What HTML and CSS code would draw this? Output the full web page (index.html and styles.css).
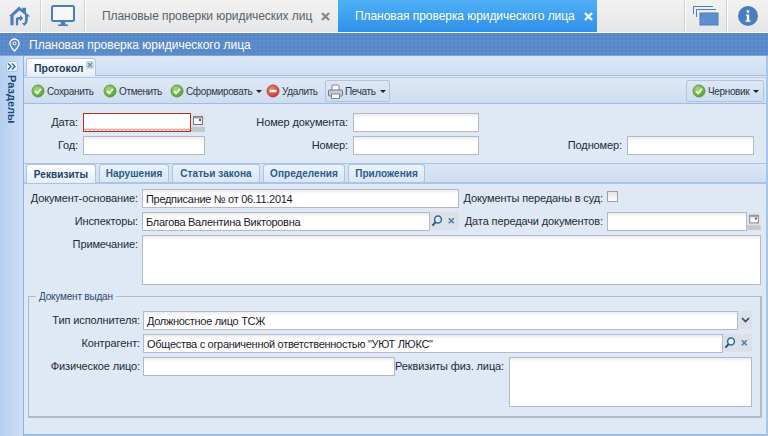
FILE: index.html
```html
<!DOCTYPE html>
<html lang="ru">
<head>
    <meta charset="UTF-8">
    <title>Плановая проверка юридического лица</title>
    <link rel="stylesheet" href="styles.css">
</head>
<body>
    <svg class="defs" width="0" height="0">
        <defs>
            <radialGradient id="greenBall" cx="40%" cy="35%" r="70%">
                <stop offset="0" stop-color="#a8dc7c"/>
                <stop offset="1" stop-color="#4a9e2c"/>
            </radialGradient>
            <radialGradient id="redBall" cx="40%" cy="35%" r="70%">
                <stop offset="0" stop-color="#f58a7c"/>
                <stop offset="1" stop-color="#d0301f"/>
            </radialGradient>
            <pattern id="zigzag" width="4" height="3" patternUnits="userSpaceOnUse">
                <path d="M0 .5L2 2.500L4 .5" fill="none" stroke="#e8403a" stroke-width="1"/>
            </pattern>
            <symbol id="ok" viewBox="0 0 14 14">
                <circle cx="7" cy="7" r="6" fill="url(#greenBall)" stroke="#5f9a48"/>
                <path d="M4 7.200l2.200 2.200L10 4.800" fill="none" stroke="#fff" stroke-width="1.700"/>
            </symbol>
            <symbol id="del" viewBox="0 0 14 14">
                <circle cx="7" cy="7" r="6" fill="url(#redBall)" stroke="#b8473a"/>
                <rect x="3.500" y="5.800" width="7" height="2.400" fill="#fff"/>
            </symbol>
            <symbol id="cal" viewBox="0 0 14 19">
                <rect width="14" height="19" fill="#dfe2e6"/>
                <rect y="14" width="14" height="5" fill="#c4c8cc"/>
                <rect x="2.500" y="3.500" width="9" height="8" fill="#fff" stroke="#6d7f92"/>
                <rect x="3" y="4" width="8" height="1.600" fill="#8fa8c4"/>
                <rect x="8" y="6" width="2" height="2" fill="#c03030"/>
            </symbol>
            <symbol id="find" viewBox="0 0 14 18">
                <rect width="14" height="18" fill="#dce1e7"/>
                <circle cx="8" cy="7.500" r="3.400" fill="#eaf3fb" stroke="#2d6ba8" stroke-width="1.500"/>
                <path d="M5.500 10.200L2.500 13.600" stroke="#1f5590" stroke-width="2"/>
            </symbol>
            <symbol id="clear" viewBox="0 0 15 18">
                <rect width="15" height="18" fill="#dce1e7"/>
                <path d="M4.800 6.300l5 5m0-5l-5 5" stroke="#4d7fb0" stroke-width="1.600"/>
            </symbol>
        </defs>
    </svg>

    <header class="topbar">
        <div class="cell cell-home">
            <svg width="24" height="22" viewBox="0 0 26 24">
                <path d="M1 12L12 1.500 15.500 5V3h4v5.500L24 12.500h-2.500V16c0 3-1.500 5.500-4 6.500L15 19.500h2.500c.8-.8 1-2 1-3.500v-5.500L12.500 6 6 11.500V22H2.500V12z" fill="#4a7dbd"/>
                <path d="M8.500 22v-6c0-2 1-3 3-3h1.500v-2l3.500 3.500L13 18v-2.200h-1.200c-.6 0-.8.300-.8 1V22z" fill="#4a7dbd"/>
            </svg>
        </div>
        <div class="cell cell-monitor">
            <svg width="24" height="22" viewBox="0 0 24 22">
                <rect x="1" y="1" width="22" height="15" rx="1.500" fill="#f4f6f8" stroke="#4a7dbd" stroke-width="2"/>
                <path d="M10 17h4l.5 2.500H17V21H7v-1.500h2.500z" fill="#4a7dbd"/>
            </svg>
        </div>
        <div class="app-tab">
            <span>Плановые проверки юридических лиц</span>
            <svg class="app-tab-x" width="9" height="9" viewBox="0 0 9 9"><path d="M1 1l7 7m0-7L1 8" stroke="#7c8894" stroke-width="2.200"/></svg>
        </div>
        <div class="app-tab app-tab-on">
            <span>Плановая проверка юридического лица</span>
            <svg class="app-tab-x" width="9" height="9" viewBox="0 0 9 9"><path d="M1 1l7 7m0-7L1 8" stroke="#fff" stroke-width="2.200"/></svg>
        </div>
        <div class="topbar-fill"></div>
        <div class="cell cell-right">
            <svg width="26" height="20" viewBox="0 0 26 20">
                <path d="M.5 8V.5H20M3.500 11V3.500H23" fill="none" stroke="#4a7dbd"/>
                <rect x="7" y="7" width="18" height="12" fill="#5d8fd0" stroke="#4a7dbd"/>
            </svg>
        </div>
        <div class="cell cell-right">
            <svg width="20" height="20" viewBox="0 0 20 20">
                <circle cx="10" cy="10" r="10" fill="#4a7dbd"/>
                <path d="M8 8.500h3.200v6h1.300v1.300H7.500v-1.300h1.300V9.800H8zM8.800 4.200h2.400v2.600H8.800z" fill="#fff"/>
            </svg>
        </div>
    </header>

    <div class="titlebar">
        <svg width="11" height="14" viewBox="0 0 11 14"><path d="M5.500 1A4.500 4.500 0 0 0 1 5.500C1 8.500 5.500 13 5.500 13S10 8.500 10 5.500A4.500 4.500 0 0 0 5.500 1z" fill="none" stroke="#fff" stroke-width="1.300"/><circle cx="5.500" cy="5.300" r="1.500" fill="none" stroke="#fff"/></svg>
        <span>Плановая проверка юридического лица</span>
    </div>

    <div class="workspace">
        <aside class="sidebar">
            <div class="sidebar-btn">
                <svg width="9" height="7" viewBox="0 0 9 7"><path d="M1 .5l3 3-3 3M5 .5l3 3-3 3" fill="none" stroke="#2b5c95" stroke-width="1.200"/></svg>
            </div>
            <div class="sidebar-label">Разделы</div>
        </aside>

        <main class="panel">
            <div class="doc-tabs">
                <div class="doc-tab">
                    <span>Протокол</span>
                    <svg class="doc-tab-x" width="8" height="8" viewBox="0 0 8 8"><rect width="8" height="8" rx="1.500" fill="#c6d6ea"/><path d="M2 2l4 4m0-4L2 6" stroke="#6d8db2" stroke-width="1.100"/></svg>
                </div>
            </div>

            <div class="toolbar">
                <button class="tool tool-save"><svg class="ico" width="14" height="14"><use href="#ok"/></svg>Сохранить</button>
                <button class="tool tool-undo"><svg class="ico" width="14" height="14"><use href="#ok"/></svg>Отменить</button>
                <button class="tool tool-make"><svg class="ico" width="14" height="14"><use href="#ok"/></svg>Сформировать<i class="caret"></i></button>
                <button class="tool tool-del"><svg class="ico" width="14" height="14"><use href="#del"/></svg>Удалить</button>
                <button class="tool tool-print">
                    <svg class="ico" width="15" height="15" viewBox="0 0 15 15">
                        <path d="M4 6V1h6l1 1v4" fill="#fff" stroke="#7a8594"/>
                        <rect x=".5" y="6" width="14" height="6" rx="1" fill="#c8ccd2" stroke="#6f7a88"/>
                        <rect x="3.500" y="10" width="8" height="4.500" fill="#fff" stroke="#7a8594"/>
                    </svg>Печать<i class="caret"></i>
                </button>
                <button class="tool tool-status"><svg class="ico" width="14" height="14"><use href="#ok"/></svg>Черновик<i class="caret"></i></button>
            </div>

            <section class="head-form">
                <div class="head-row">
                    <label class="lbl lbl-a">Дата:</label>
                    <div class="combo combo-a">
                        <div class="input input-bad">
                            <svg class="wave" width="106" height="3"><rect width="106" height="3" fill="url(#zigzag)"/></svg>
                        </div>
                        <svg class="trig" width="14" height="19"><use href="#cal"/></svg>
                    </div>
                    <label class="lbl lbl-b">Номер документа:</label>
                    <div class="input input-b"></div>
                </div>
                <div class="head-row">
                    <label class="lbl lbl-a">Год:</label>
                    <div class="input combo-a"></div>
                    <label class="lbl lbl-b">Номер:</label>
                    <div class="input input-b"></div>
                    <label class="lbl lbl-c">Подномер:</label>
                    <div class="input input-c"></div>
                </div>
            </section>

            <nav class="form-tabs">
                <div class="form-tab form-tab-on tab-1">Реквизиты</div>
                <div class="form-tab tab-2">Нарушения</div>
                <div class="form-tab tab-3">Статьи закона</div>
                <div class="form-tab tab-4">Определения</div>
                <div class="form-tab tab-5">Приложения</div>
            </nav>

            <section class="form-body">
                <div class="row">
                    <label class="lbl lbl-main">Документ-основание:</label>
                    <div class="input input-left">Предписание № от 06.11.2014</div>
                    <label class="lbl lbl-right">Документы переданы в суд:</label>
                    <div class="checkbox"></div>
                </div>
                <div class="row">
                    <label class="lbl lbl-main">Инспекторы:</label>
                    <div class="combo input-left">
                        <div class="input">Благова Валентина Викторовна</div>
                        <svg class="trig" width="14" height="18"><use href="#find"/></svg>
                        <svg class="trig" width="15" height="18"><use href="#clear"/></svg>
                    </div>
                    <label class="lbl lbl-right">Дата передачи документов:</label>
                    <div class="combo combo-date">
                        <div class="input"></div>
                        <svg class="trig" width="14" height="18"><use href="#cal"/></svg>
                    </div>
                </div>
                <div class="row">
                    <label class="lbl lbl-main">Примечание:</label>
                    <div class="input textarea-note"></div>
                </div>

                <fieldset class="issued">
                    <legend>Документ выдан</legend>
                    <div class="row">
                        <label class="lbl lbl-issued">Тип исполнителя:</label>
                        <div class="combo combo-wide">
                            <div class="input">Должностное лицо ТСЖ</div>
                            <div class="trig trig-arrow"><svg width="9" height="6" viewBox="0 0 9 6"><path d="M1 1l3.500 3.500L8 1" fill="none" stroke="#24486f" stroke-width="1.600"/></svg></div>
                        </div>
                    </div>
                    <div class="row">
                        <label class="lbl lbl-issued">Контрагент:</label>
                        <div class="combo combo-wide">
                            <div class="input">Общества с ограниченной ответственностью "УЮТ ЛЮКС"</div>
                            <svg class="trig" width="14" height="18"><use href="#find"/></svg>
                            <svg class="trig" width="15" height="18"><use href="#clear"/></svg>
                        </div>
                    </div>
                    <div class="row">
                        <label class="lbl lbl-issued">Физическое лицо:</label>
                        <div class="input input-person"></div>
                        <label class="lbl lbl-req">Реквизиты физ. лица:</label>
                        <div class="input textarea-req"></div>
                    </div>
                </fieldset>
            </section>
        </main>
    </div>
</body>
</html>
```

FILE: styles.css
```css
* {
    box-sizing: border-box;
}
html, body {
    height: 100%;
}
body {
    margin: 0;
    width: 768px;
    height: 436px;
    overflow: hidden;
    display: flex;
    flex-direction: column;
    font-family: "Liberation Sans", Arial, sans-serif;
    font-size: 11px;
    letter-spacing: -.12px;
    color: #1f2a38;
    background-color: #dfe8f5;
}
.defs {
    position: absolute;
}
.ico {
    flex: none;
}

/* top bar */
.topbar {
    flex: none;
    display: flex;
    height: 33px;
    background: linear-gradient(#f2f2f2, #e6e6e6);
    border-bottom: 1px solid #fff;
}
.cell {
    display: flex;
    align-items: center;
    justify-content: center;
    border-right: 1px solid #cfcfcf;
    box-shadow: 1px 0 0 #fff;
}
.cell-home {
    width: 41px;
}
.cell-monitor {
    width: 43px;
    margin-left: 1px;
}
.cell-right {
    width: 42px;
    border-right: 0;
    border-left: 1px solid #cfcfcf;
    box-shadow: inset 1px 0 0 #fff;
}
.app-tab {
    width: 253px;
    display: flex;
    align-items: center;
    padding-left: 17px;
    font-size: 12px;
    letter-spacing: -.06px;
    white-space: nowrap;
    color: #56626e;
}
.app-tab-x {
    flex: none;
    margin-left: 9px;
}
.app-tab-on {
    width: 259px;
    color: #fff;
    background: linear-gradient(#4fb0f7, #2f90e8);
}
.topbar-fill {
    flex: 1;
}

/* title */
.titlebar {
    flex: none;
    height: 23px;
    display: flex;
    align-items: center;
    gap: 9px;
    padding: 1px 0 0 9px;
    font-size: 12px;
    letter-spacing: 0;
    color: #fff;
    background-color: #5b8ccc;
    background-image: radial-gradient(#5384c4 1px, transparent 1px);
    background-size: 4px 4px;
    border-bottom: 1px solid #7ba6dc;
}

.workspace {
    flex: 1;
    display: flex;
    min-height: 0;
}
.sidebar {
    flex: none;
    width: 24px;
    background: linear-gradient(90deg, #b5cff0, #cfe0f6);
    border-right: 1px solid #8eb2e0;
    display: flex;
    flex-direction: column;
    align-items: center;
    padding: 5px 0 0 0;
}
.sidebar-btn {
    width: 12px;
    height: 11px;
    background: #eaf1fb;
    border: 1px solid #a9c4e6;
    border-radius: 2px;
    display: flex;
    align-items: center;
    justify-content: center;
}
.sidebar-label {
    margin-top: 3px;
    writing-mode: vertical-rl;
    font-size: 11px;
    letter-spacing: 0;
    font-weight: bold;
    color: #1c4a80;
}

.panel {
    flex: 1;
    min-width: 0;
    display: flex;
    flex-direction: column;
    border-right: 2px solid #a8c4e8;
    border-bottom: 2px solid #9dbde6;
}

/* document tabs */
.doc-tabs {
    flex: none;
    height: 20px;
    padding: 2px 0 0 2px;
    background: linear-gradient(#dbe7f6, #cfdef1);
    border-bottom: 1px solid #9dbde6;
}
.doc-tab {
    width: 70px;
    height: 18px;
    display: flex;
    align-items: center;
    padding: 0 1px 0 7px;
    font-size: 10.5px;
    letter-spacing: 0;
    font-weight: bold;
    color: #1d3a5e;
    background: linear-gradient(#fff, #e6eef9);
    border: 1px solid #a9c4e6;
    border-bottom: 0;
    border-radius: 3px 3px 0 0;
}
.doc-tab-x {
    margin: -6px 0 0 auto;
}

/* toolbar */
.toolbar {
    flex: none;
    height: 27px;
    margin-top: 1px;
    display: flex;
    align-items: center;
    padding: 1px 2px 0 7px;
    background: linear-gradient(#dfe9f6, #cddcf0);
    border-top: 1px solid #b4cce9;
    border-bottom: 1px solid #9dbde6;
}
.tool {
    display: flex;
    align-items: center;
    flex: none;
    gap: 2px;
    height: 21px;
    padding: 0;
    font-family: inherit;
    font-size: 10px;
    letter-spacing: -.35px;
    color: #2c3644;
    background: none;
    border: 0;
}
.tool-save { width: 72px; }
.tool-undo { width: 67px; }
.tool-make { width: 96px; }
.tool-del { width: 59px; }
.tool-print {
    width: 65px;
    height: 22px;
    padding: 0 2px;
    border: 1px solid #b3c3d8;
    border-radius: 2px;
}
.tool-status {
    margin-left: auto;
    width: 78px;
    height: 22px;
    padding: 0 4px 0 5px;
    border: 1px solid #b3c3d8;
    border-radius: 2px;
}
.caret {
    width: 0;
    height: 0;
    margin-left: 2px;
    border: 3px solid transparent;
    border-top: 3px solid #222;
    border-bottom: 0;
}

/* inputs */
.input {
    height: 19px;
    padding: 0 3px;
    line-height: 18px;
    letter-spacing: -.3px;
    white-space: nowrap;
    overflow: hidden;
    color: #1a1a2a;
    background: linear-gradient(#ececec, #fff 4px);
    border: 1px solid #b5b8c8;
}
.input-bad {
    position: relative;
    border-color: #b62f16;
    background: #fff;
}
.wave {
    position: absolute;
    left: 0;
    bottom: 0;
}
.combo {
    display: flex;
}
.combo .input {
    flex: 1;
    min-width: 0;
}
.trig {
    flex: none;
}
.trig-arrow {
    width: 14px;
    height: 18px;
    display: flex;
    align-items: center;
    justify-content: center;
    background: #dce1e7;
}
.lbl {
    flex: none;
    text-align: right;
    line-height: 18px;
    white-space: nowrap;
}

/* header fields */
.head-form {
    flex: none;
    height: 59px;
    padding-top: 9px;
    display: flex;
    flex-direction: column;
    gap: 4px;
}
.head-row {
    display: flex;
    height: 19px;
}
.head-row .lbl {
    line-height: 19px;
}
.lbl-a {
    width: 54px;
    margin-right: 5px;
}
.combo-a {
    width: 122px;
}
.lbl-b {
    width: 143px;
    margin-right: 5px;
}
.input-b {
    width: 126px;
}
.lbl-c {
    width: 143px;
    margin-right: 5px;
}
.input-c {
    width: 127px;
}

/* form tabs */
.form-tabs {
    flex: none;
    height: 21px;
    background: linear-gradient(#dbe7f6, #cfdef1);
    border-top: 1px solid #a9c4e6;
    border-bottom: 2px solid #a9c4e6;
    display: flex;
    padding-left: 2px;
}
.form-tab {
    height: 18px;
    margin-right: 3px;
    display: flex;
    align-items: center;
    justify-content: center;
    font-size: 10px;
    letter-spacing: .05px;
    font-weight: bold;
    color: #2b5a8e;
    background: linear-gradient(#edf3fb, #d9e6f6);
    border: 1px solid #a9c4e6;
    border-bottom: 0;
    border-radius: 3px 3px 0 0;
}
.form-tab-on {
    height: 19px;
    color: #1d3f6c;
    background: linear-gradient(#fff, #e4edf9);
}
.tab-1 { width: 70px; }
.tab-2 { width: 70px; }
.tab-3 { width: 88px; }
.tab-4 { width: 82px; }
.tab-5 { width: 77px; }

/* body of the form */
.form-body {
    flex: 1;
    min-height: 0;
    padding-top: 5px;
    display: flex;
    flex-direction: column;
    gap: 4px;
}
.row {
    display: flex;
}
.lbl-main {
    width: 114px;
    margin-right: 4px;
}
.input-left {
    width: 317px;
}
.lbl-right {
    width: 144px;
    margin-right: 4px;
}
.checkbox {
    width: 11px;
    height: 11px;
    margin-top: 2px;
    background: linear-gradient(#e4e4e4, #fff);
    border: 1px solid #9a9fa8;
}
.combo-date {
    width: 154px;
}
.textarea-note {
    width: 619px;
    height: 50px;
}
.issued {
    width: 734px;
    height: 127px;
    margin: 2px 0 0 4px;
    padding: 9px 0 0 0;
    display: flex;
    flex-direction: column;
    gap: 4px;
    min-width: 0;
    border: 1px solid #b5b8c8;
    border-width: 1px 2px 2px 1px;
}
.issued legend {
    margin-left: 7px;
    padding: 0 3px;
    line-height: 11px;
    font-size: 10px;
    letter-spacing: -.2px;
    color: #2b4a70;
}
.lbl-issued {
    width: 111px;
    margin-right: 3px;
}
.combo-wide {
    width: 609px;
}
.input-person {
    width: 252px;
}
.lbl-req {
    width: 109px;
    margin-right: 5px;
}
.textarea-req {
    width: 243px;
    height: 50px;
}
```
